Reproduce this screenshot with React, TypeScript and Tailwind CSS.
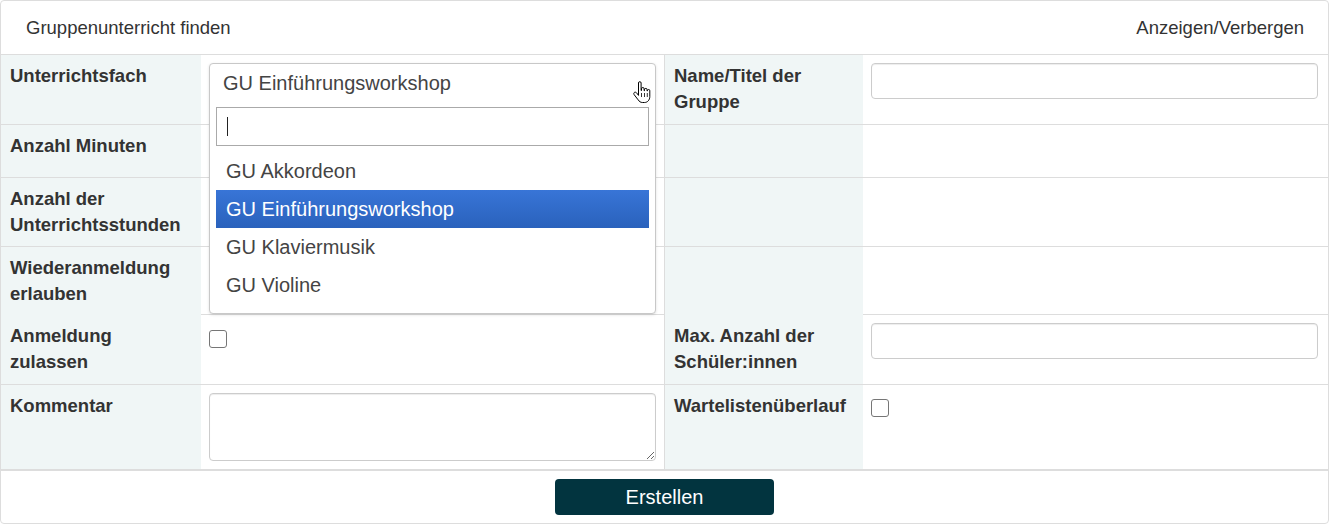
import React from 'react'

const font = { fontFamily: '"Liberation Sans", Arial, Helvetica, sans-serif' }

const options = ['GU Akkordeon', 'GU Einführungsworkshop', 'GU Klaviermusik', 'GU Violine']

const HandCursor: React.FC = () => (
  <svg width="19" height="23" viewBox="0 0 19 23" className="absolute right-[4px] top-[17px]">
    <path
      d="M6.5 2a1.3 1.3 0 0 1 2.6 0v7.5h.4V7.8a1.3 1.3 0 0 1 2.6 0v1.9h.4V8.7a1.3 1.3 0 0 1 2.6 0v1.3h.3v-.3a1.2 1.2 0 0 1 2.4 0V15.5c0 3.3-2.1 6-5.3 6h-1.9c-2.1 0-3.3-1-4.4-2.6L2.1 13.6c-.6-.9-.3-1.9.5-2.3.8-.3 1.6 0 2.1.7l1.8 2.4Z"
      fill="#fff"
      stroke="#000"
      strokeWidth="1"
      strokeLinejoin="round"
    />
    <path d="M9.5 12v4M12.5 12v4M15.3 12v4" stroke="#000" strokeWidth="0.8" />
  </svg>
)

const Label: React.FC<{ children: React.ReactNode; border?: boolean }> = ({ children, border }) => (
  <div
    className={
      'bg-[#f0f6f6] px-[9px] py-2 font-bold text-[18.5px] leading-[26px] text-[#333]' +
      (border ? ' border-l border-[#ddd]' : '')
    }
  >
    {children}
  </div>
)

const Input: React.FC = () => (
  <input
    type="text"
    className="block h-[36px] w-[447px] rounded-[4px] border border-[#ccc] bg-white shadow-[inset_0_1px_1px_rgba(0,0,0,0.075)] outline-none"
  />
)

const Checkbox: React.FC<{ mt: string }> = ({ mt }) => (
  <div className={'h-[18px] w-[18px] rounded-[3px] border-[1.5px] border-[#767676] bg-white ' + mt} />
)

const Dropdown: React.FC = () => (
  <div className="absolute left-2 top-2 z-10 h-[251px] w-[447px] rounded-[4px] border border-[#c8c8c8] bg-white shadow-[0_1px_3px_rgba(0,0,0,0.12)]">
    <div className="relative h-[40px] pl-[13px] text-[20px] leading-[38px] text-[#444]">
      GU Einführungsworkshop
      <HandCursor />
    </div>
    <div className="mx-[6px] mt-[3px] flex h-[39px] items-center border border-[#aaa] pl-[10px]">
      <span className="h-[19px] w-px bg-[#222]" />
    </div>
    <ul className="mt-[6px] px-[6px]">
      {options.map((o) => (
        <li
          key={o}
          className={
            'h-[38px] px-[10px] text-[20px] leading-[38px] ' +
            (o === 'GU Einführungsworkshop'
              ? 'bg-gradient-to-b from-[#3875d7] to-[#2a62bc] text-white'
              : 'text-[#444]')
          }
        >
          {o}
        </li>
      ))}
    </ul>
  </div>
)

const Row: React.FC<{ children: React.ReactNode; last?: boolean; h?: string }> = ({ children, last, h }) => (
  <div
    className={
      'grid grid-cols-[200px_463px_199px_1fr] ' +
      (last ? 'border-b-2 border-[#ddd]' : 'border-b border-[#ddd]') +
      (h ? ' ' + h : '')
    }
  >
    {children}
  </div>
)

const App: React.FC = () => {
  return (
    <div style={font} className="h-[524px] w-[1329px] bg-white">
      <div className="h-[524px] overflow-hidden rounded-[4px] border border-[#ddd] text-[#333]">
        <div className="flex h-[54px] items-center justify-between border-b border-[#ddd] pl-[25px] pr-[24px] text-[18.5px]">
          <span>Gruppenunterricht finden</span>
          <span>Anzeigen/Verbergen</span>
        </div>

        <Row h="h-[70px]">
          <Label>Unterrichtsfach</Label>
          <div className="relative p-2">
            <div className="h-[36px]" />
            <Dropdown />
          </div>
          <Label border>Name/Titel der Gruppe</Label>
          <div className="p-2">
            <Input />
          </div>
        </Row>

        <Row>
          <Label>Anzahl Minuten</Label>
          <div className="p-2">
            <div className="h-[36px]" />
          </div>
          <Label border>{''}</Label>
          <div />
        </Row>

        <Row>
          <Label>Anzahl der Unterrichtsstunden</Label>
          <div />
          <Label border>{''}</Label>
          <div />
        </Row>

        <Row h="h-[68px]">
          <Label>Wiederanmeldung erlauben</Label>
          <div />
          <Label border>{''}</Label>
          <div />
        </Row>

        <Row h="h-[70px]">
          <Label>Anmeldung zulassen</Label>
          <div className="p-2">
            <Checkbox mt="mt-[7px]" />
          </div>
          <Label border>Max. Anzahl der Schüler:innen</Label>
          <div className="p-2">
            <Input />
          </div>
        </Row>

        <Row last>
          <Label>Kommentar</Label>
          <div className="p-2">
            <textarea className="block h-[68px] w-full rounded-[4px] border border-[#ccc] bg-white shadow-[inset_0_1px_1px_rgba(0,0,0,0.075)] outline-none" />
          </div>
          <Label border>Wartelistenüberlauf</Label>
          <div className="p-2">
            <Checkbox mt="mt-[6px]" />
          </div>
        </Row>

        <div className="flex justify-center pt-[8px]">
          <button className="h-[36px] w-[219px] rounded-[4px] bg-[#02343f] text-[20px] text-white">
            Erstellen
          </button>
        </div>
      </div>
    </div>
  )
}

export default App
